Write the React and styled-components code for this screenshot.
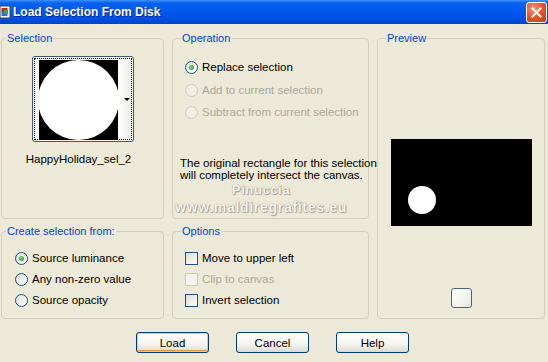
import React from 'react';
import styled, { createGlobalStyle } from 'styled-components';

const GlobalStyle = createGlobalStyle`
  html, body {
    margin: 0;
    padding: 0;
    background: #ECE9D8;
  }
  body {
    font-family: "Liberation Sans", Arial, sans-serif;
    font-size: 11px;
    color: #000;
  }
`;

const Window = styled.div`
  position: relative;
  width: 548px;
  height: 362px;
  background: #ECE9D8;
  overflow: hidden;
  display: flex;
  flex-direction: column;
`;

const TitleBar = styled.div`
  height: 24px;
  display: flex;
  align-items: center;
  background: linear-gradient(to bottom, #3D95FF 0%, #0A62F0 12%, #0058EE 45%, #0050E0 80%, #003FCC 100%);
  padding-right: 1px;
`;

const TitleIcon = styled.svg`
  width: 11px;
  height: 14px;
  margin-right: 2px;
  flex-shrink: 0;
`;

const TitleText = styled.span`
  flex: 1;
  color: #fff;
  font-weight: bold;
  font-size: 12px;
  text-shadow: 1px 1px 0 #0A1E8C;
`;

const CloseButton = styled.div`
  width: 19px;
  height: 19px;
  border: 1px solid #fff;
  border-radius: 3px;
  background: radial-gradient(circle at 35% 30%, #F39C7E 0%, #E4572B 45%, #C83A14 100%);
  display: flex;
  align-items: center;
  justify-content: center;
`;

const Body = styled.div`
  padding: 8px 3px 0 1px;
  display: flex;
  flex-direction: column;
`;

const Grid = styled.div`
  display: grid;
  grid-template-columns: 163px 197px 168px;
  grid-template-rows: 187px 94px;
  column-gap: 8px;
  row-gap: 6px;
`;

const Group = styled.fieldset`
  margin: 0;
  padding: 0 0 0 ${p => p.$pad || 0}px;
  min-width: 0;
  border: 1px solid #D0D0BF;
  border-radius: 4px;
  box-sizing: border-box;
  grid-column: ${p => p.$col || 'auto'};
  grid-row: ${p => p.$rows || 'auto'};
  display: flex;
  flex-direction: column;
`;

const Legend = styled.legend`
  color: #0046D5;
  padding: 0 1px;
  margin-left: ${p => p.$indent || 4}px;
  line-height: 13px;
  font-size: 11px;
`;

const Thumb = styled.div`
  align-self: center;
  margin-top: 11px;
  width: 102px;
  height: 86px;
  box-sizing: border-box;
  border: 1px solid #3C5A7A;
  border-radius: 3px;
  padding: 1px;
  background: #F4F3EC;
`;

const ThumbFocus = styled.div`
  height: 100%;
  box-sizing: border-box;
  border: 1px dotted #000;
  display: flex;
  padding: 1px 0 1px 4px;
`;

const ThumbImage = styled.div`
  position: relative;
  width: 79px;
  height: 80px;
  background: #000;
  overflow: hidden;
  &::after {
    content: '';
    position: absolute;
    left: -1px;
    top: 0;
    width: 81px;
    height: 80px;
    border-radius: 50%;
    background: #fff;
  }
`;

const ThumbStrip = styled.div`
  flex: 1;
  display: flex;
  align-items: center;
  justify-content: flex-end;
  padding-right: 1px;
  background: linear-gradient(to right, #FFFFFF, #EDECE4);
`;

const Arrow = styled.span`
  width: 0;
  height: 0;
  border-left: 3px solid transparent;
  border-right: 3px solid transparent;
  border-top: 3px solid #000;
`;

const ThumbCaption = styled.div`
  text-align: center;
  margin-top: 11px;
  padding-right: 8px;
  font-size: 11.5px;
`;

const OptionList = styled.div`
  display: flex;
  flex-direction: column;
  gap: ${p => p.$gap || 9}px;
  margin-top: ${p => p.$top || 0}px;
`;

const OptionRow = styled.label`
  display: flex;
  align-items: center;
  gap: 4px;
  height: 13px;
  line-height: 13px;
  font-size: 11.5px;
  white-space: nowrap;
  color: ${p => (p.$disabled ? '#ACA899' : '#000')};
`;

const Radio = styled.span`
  position: relative;
  width: 13px;
  height: 13px;
  box-sizing: border-box;
  border-radius: 50%;
  border: 1px solid ${p => (p.$disabled ? '#CAC8BB' : '#1C5180')};
  background: ${p => (p.$disabled ? '#F0EEE4' : 'linear-gradient(135deg, #DCDCD7, #FFFFFF)')};
  flex-shrink: 0;
  &::after {
    content: '';
    display: ${p => (p.$checked ? 'block' : 'none')};
    position: absolute;
    left: 3px;
    top: 3px;
    width: 5px;
    height: 5px;
    border-radius: 50%;
    background: radial-gradient(circle at 40% 40%, #6FD36F, #21A121);
  }
`;

const Check = styled.span`
  width: 13px;
  height: 13px;
  box-sizing: border-box;
  border: 1px solid ${p => (p.$disabled ? '#CAC8BB' : '#1C5180')};
  background: ${p => (p.$disabled ? '#F4F3EE' : 'linear-gradient(135deg, #DCDCD7, #FFFFFF)')};
  flex-shrink: 0;
`;

const Note = styled.p`
  margin: 38px 0 0 -5px;
  font-size: 11.5px;
  line-height: 12px;
  white-space: nowrap;
`;

const Canvas = styled.div`
  position: relative;
  align-self: center;
  margin-top: 94px;
  width: 141px;
  height: 87px;
  background: #000;
`;

const Dot = styled.span`
  position: absolute;
  left: ${p => p.$x - p.$r}px;
  top: ${p => p.$y - p.$r}px;
  width: ${p => p.$r * 2}px;
  height: ${p => p.$r * 2}px;
  border-radius: 50%;
  background: #fff;
`;

const SmallButton = styled.div`
  align-self: center;
  margin-top: 62px;
  width: 21px;
  height: 20px;
  box-sizing: border-box;
  border: 1px solid #4A6480;
  border-radius: 3px;
  background: linear-gradient(135deg, #FFFFFF, #EAE9E2);
`;

const ButtonRow = styled.div`
  display: flex;
  gap: 27px;
  margin: 13px 0 0 135px;
`;

const Button = styled.button`
  width: 73px;
  height: 21px;
  box-sizing: border-box;
  padding: 0;
  font-family: "Liberation Sans", Arial, sans-serif;
  font-size: 11.5px;
  color: #000;
  border: 1px solid #003C74;
  border-radius: 3px;
  background: linear-gradient(to bottom, #FFFFFF 0%, #F4F3EE 60%, #DCDAD0 100%);
  box-shadow: ${p => (p.$default ? 'inset 0 0 0 1px #FBC862, inset 0 -1px 0 1px #E5973B' : 'none')};
`;

const Watermark = styled.div`
  position: absolute;
  left: 168px;
  top: 181px;
  width: 186px;
  display: flex;
  flex-direction: column;
  align-items: center;
  font-family: "Liberation Sans", Arial, sans-serif;
  font-weight: bold;
  color: #F4F2EA;
  text-shadow: 0 0 1px #8A887E, 1px 1px 1px #A8A69C;
  pointer-events: none;
`;

const MarkName = styled.span`
  font-size: 13px;
  line-height: 17px;
  letter-spacing: 0.6px;
`;

const MarkSite = styled.span`
  font-size: 14px;
  line-height: 19px;
  letter-spacing: 0.7px;
`;

const App = () => (
  <Window>
    <GlobalStyle />
    <TitleBar>
      <TitleIcon viewBox="0 0 11 14">
        <rect x="0" y="1" width="10" height="12" fill="#F2F2F2" stroke="#4A4A4A" strokeWidth="1" />
        <rect x="1.5" y="3" width="6" height="4" fill="#C0282E" />
        <rect x="1.5" y="7" width="6" height="4" fill="#2E6FD0" />
        <rect x="4" y="5" width="4" height="4" fill="#38A838" />
      </TitleIcon>
      <TitleText>Load Selection From Disk</TitleText>
      <CloseButton>
        <svg width="11" height="11" viewBox="0 0 11 11">
          <path d="M1.5 1.5 L9.5 9.5 M9.5 1.5 L1.5 9.5" stroke="#fff" strokeWidth="2" strokeLinecap="square" />
        </svg>
      </CloseButton>
    </TitleBar>

    <Body>
      <Grid>
        <Group $col="1" $rows="1">
          <Legend $indent={4}>Selection</Legend>
          <Thumb>
            <ThumbFocus>
              <ThumbImage />
              <ThumbStrip>
                <Arrow />
              </ThumbStrip>
            </ThumbFocus>
          </Thumb>
          <ThumbCaption>HappyHoliday_sel_2</ThumbCaption>
        </Group>

        <Group $col="2" $rows="1" $pad={12}>
          <Legend $indent={-4}>Operation</Legend>
          <OptionList $top={16} $gap={9.5}>
            <OptionRow><Radio $checked />Replace selection</OptionRow>
            <OptionRow $disabled><Radio $disabled />Add to current selection</OptionRow>
            <OptionRow $disabled><Radio $disabled />Subtract from current selection</OptionRow>
          </OptionList>
          <Note>
            The original rectangle for this selection<br />
            will completely intersect the canvas.
          </Note>
        </Group>

        <Group $col="3" $rows="1 / span 2">
          <Legend $indent={8}>Preview</Legend>
          <Canvas>
            <Dot $x={31} $y={61} $r={14} />
          </Canvas>
          <SmallButton />
        </Group>

        <Group $col="1" $rows="2" $pad={13}>
          <Legend $indent={-9}>Create selection from:</Legend>
          <OptionList $top={14} $gap={8}>
            <OptionRow><Radio $checked />Source luminance</OptionRow>
            <OptionRow><Radio />Any non-zero value</OptionRow>
            <OptionRow><Radio />Source opacity</OptionRow>
          </OptionList>
        </Group>

        <Group $col="2" $rows="2" $pad={12}>
          <Legend $indent={-4}>Options</Legend>
          <OptionList $top={14} $gap={8}>
            <OptionRow><Check />Move to upper left</OptionRow>
            <OptionRow $disabled><Check $disabled />Clip to canvas</OptionRow>
            <OptionRow><Check />Invert selection</OptionRow>
          </OptionList>
        </Group>
      </Grid>

      <ButtonRow>
        <Button $default>Load</Button>
        <Button>Cancel</Button>
        <Button>Help</Button>
      </ButtonRow>
    </Body>

    <Watermark>
      <MarkName>Pinuccia</MarkName>
      <MarkSite>www.maldiregrafites.eu</MarkSite>
    </Watermark>
  </Window>
);

export default App;
